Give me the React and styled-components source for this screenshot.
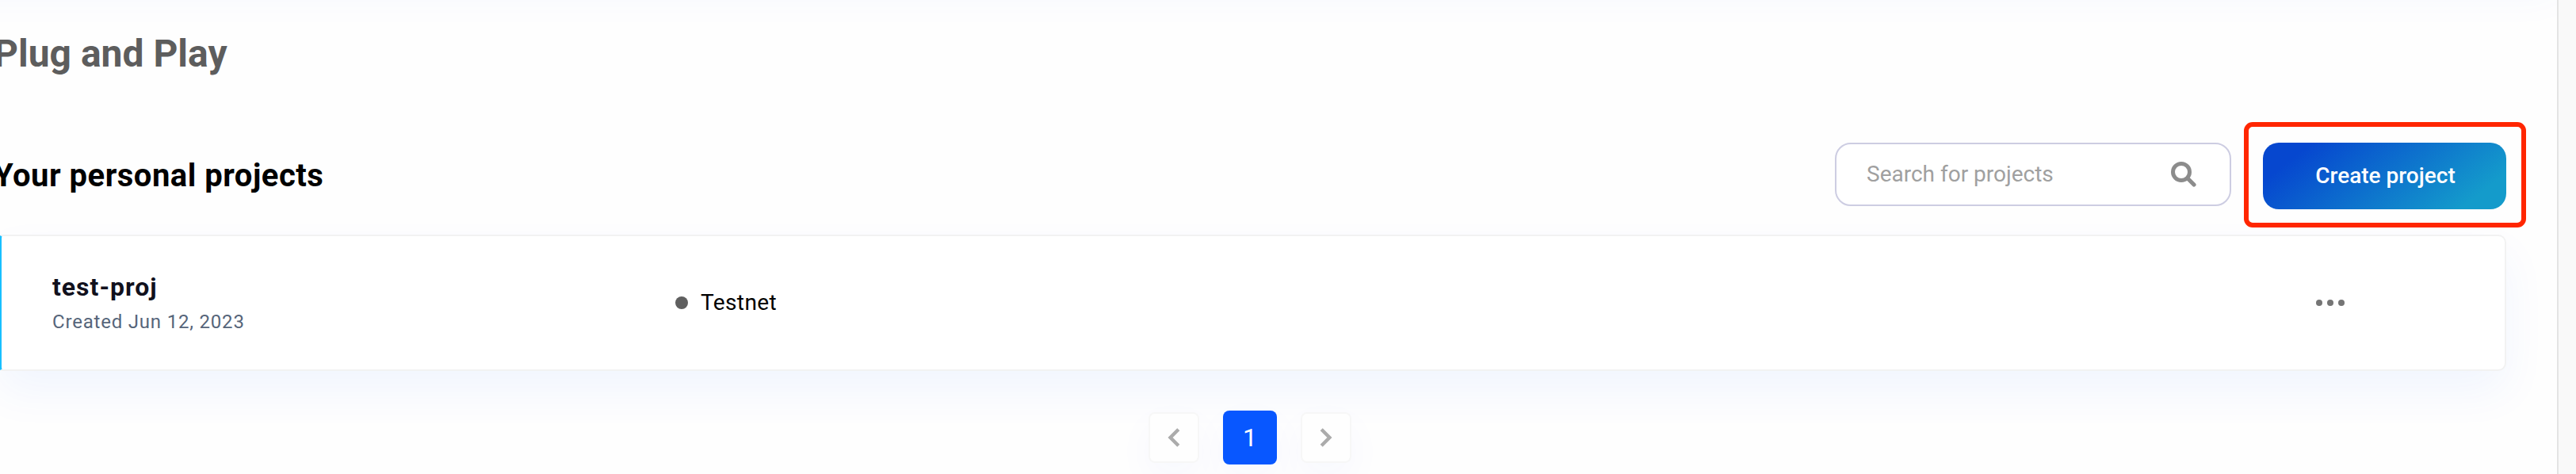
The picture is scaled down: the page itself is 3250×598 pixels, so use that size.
import React from "react";
import styled, { createGlobalStyle } from "styled-components";

const GlobalStyle = createGlobalStyle`
  *, *::before, *::after { box-sizing: border-box; }
  body { margin: 0; background: #fefefe; font-family: Roboto, "Liberation Sans", sans-serif; }
  button, input { font-family: inherit; }
`;

const Page = styled.div`
  display: flex;
  height: 598px;
  overflow: hidden;
`;

const Main = styled.main`
  flex: 1;
  display: flex;
  flex-direction: column;
  overflow: hidden;
  background: #fefefe;
`;

const Rail = styled.aside`
  width: 24px;
  flex: none;
  border-left: 2px solid #e4e4e4;
  background: #f9f9f9;
`;

const TopBar = styled.header`
  flex: none;
  height: 100px;
  margin: -137px -4px 0 -80px;
  box-shadow: 0 26px 56px rgba(8, 100, 255, 0.05);
`;

const PageTitle = styled.h1`
  margin: 77px 0 0 -8px;
  font-size: 48px;
  line-height: 56px;
  font-weight: 700;
  color: #5d5d5d;
`;

const Toolbar = styled.section`
  display: flex;
  align-items: flex-start;
  height: 84px;
  margin: 84px 64px 0 -8px;
`;

const SectionTitle = styled.h2`
  margin: 0 auto 0 0;
  font-size: 40px;
  line-height: 83px;
  font-weight: 700;
  letter-spacing: 0.5px;
  color: #000;
`;

const SearchBox = styled.label`
  display: flex;
  align-items: center;
  width: 500px;
  height: 80px;
  margin-right: 40px;
  padding: 0 42px 0 38px;
  border: 2px solid #cdcde2;
  border-radius: 20px;
  background: #fff;
`;

const SearchInput = styled.input`
  flex: 1;
  min-width: 0;
  padding: 0;
  border: 0;
  outline: 0;
  background: transparent;
  font-size: 28px;
  line-height: 36px;
  &::placeholder { color: #a0a0a0; opacity: 1; }
`;

const CreateButton = styled.button`
  position: relative;
  width: 307px;
  height: 84px;
  padding: 0 0 0 2px;
  border: 0;
  border-radius: 20px;
  background: linear-gradient(142deg, #0647cf 15%, #149bcb 86%);
  color: #fff;
  font-size: 28px;
  line-height: 84px;
  font-weight: 500;
`;

const Highlight = styled.span`
  position: absolute;
  inset: -26px -25px -23px -24px;
  border: 6px solid #ff2600;
  border-radius: 11px;
  pointer-events: none;
`;

const ProjectCard = styled.article`
  display: flex;
  align-items: center;
  flex: none;
  height: 172px;
  margin: 32px 64px 0 -2px;
  border: 2px solid #f2f2f2;
  border-left: 4px solid #18bfff;
  border-radius: 5px 10px 10px 5px;
  background: #fff;
  box-shadow: 0 26px 56px rgba(8, 87, 255, 0.055);
`;

const ProjectInfo = styled.div`
  width: 786px;
  padding-left: 64px;
`;

const ProjectName = styled.div`
  font-size: 32px;
  line-height: 40px;
  font-weight: 700;
  letter-spacing: 1px;
  color: #11111d;
`;

const ProjectDate = styled.div`
  margin-top: 8px;
  font-size: 24px;
  line-height: 32px;
  letter-spacing: 0.8px;
  color: #56657a;
`;

const Network = styled.div`
  display: flex;
  align-items: center;
  gap: 16px;
  margin-left: 64px;
  font-size: 28px;
  line-height: 34px;
  letter-spacing: 0.4px;
  color: #000;
`;

const StatusDot = styled.span`
  width: 16px;
  height: 16px;
  border-radius: 50%;
  background: #5f5f5f;
`;

const MoreButton = styled.button`
  display: flex;
  gap: 6px;
  margin: 0 202px 0 auto;
  padding: 0;
  border: 0;
  background: none;
`;

const MoreDot = styled.span`
  width: 8px;
  height: 8px;
  border-radius: 50%;
  background: #757575;
`;

const Pagination = styled.nav`
  display: flex;
  align-items: center;
  flex: none;
  gap: 30px;
  margin: 50px 0 0 1449px;
`;

const PageButton = styled.button`
  display: flex;
  align-items: center;
  justify-content: center;
  width: ${(p) => (p.$active ? 68 : 64)}px;
  height: ${(p) => (p.$active ? 68 : 64)}px;
  padding: 0;
  border: ${(p) => (p.$active ? "0" : "2px solid #f7f7f7")};
  border-radius: 8px;
  background: ${(p) => (p.$active ? "#0857ff" : "#fefefe")};
  color: ${(p) => (p.$active ? "#fff" : "#ababab")};
  font-size: 32px;
  line-height: 68px;
  box-shadow: 0 18px 50px rgba(8, 60, 255, 0.035);
`;

const SearchIcon = () => (
  <svg width="32" height="32" viewBox="0 0 32 32" fill="none" stroke="#8c8c8c">
    <circle cx="13" cy="13" r="10.5" strokeWidth="5" />
    <path d="M21.5 21.5L29 29" strokeWidth="5.2" strokeLinecap="round" />
  </svg>
);

const Chevron = ({ next }) => (
  <svg width="16" height="24" viewBox="0 0 16 24" fill="none" stroke="currentColor" strokeWidth="4.4">
    <path d={next ? "M2.2 1.8L12.4 12L2.2 22.2" : "M13.8 1.8L3.6 12L13.8 22.2"} />
  </svg>
);

export default function App() {
  return (
    <Page>
      <GlobalStyle />
      <Main>
        <TopBar />
        <PageTitle>Plug and Play</PageTitle>
        <Toolbar>
          <SectionTitle>Your personal projects</SectionTitle>
          <SearchBox>
            <SearchInput placeholder="Search for projects" />
            <SearchIcon />
          </SearchBox>
          <CreateButton>
            Create project
            <Highlight />
          </CreateButton>
        </Toolbar>
        <ProjectCard>
          <ProjectInfo>
            <ProjectName>test-proj</ProjectName>
            <ProjectDate>Created Jun 12, 2023</ProjectDate>
          </ProjectInfo>
          <Network>
            <StatusDot />
            Testnet
          </Network>
          <MoreButton aria-label="More">
            <MoreDot />
            <MoreDot />
            <MoreDot />
          </MoreButton>
        </ProjectCard>
        <Pagination>
          <PageButton aria-label="Previous"><Chevron /></PageButton>
          <PageButton $active>1</PageButton>
          <PageButton aria-label="Next"><Chevron next /></PageButton>
        </Pagination>
      </Main>
      <Rail />
    </Page>
  );
}
